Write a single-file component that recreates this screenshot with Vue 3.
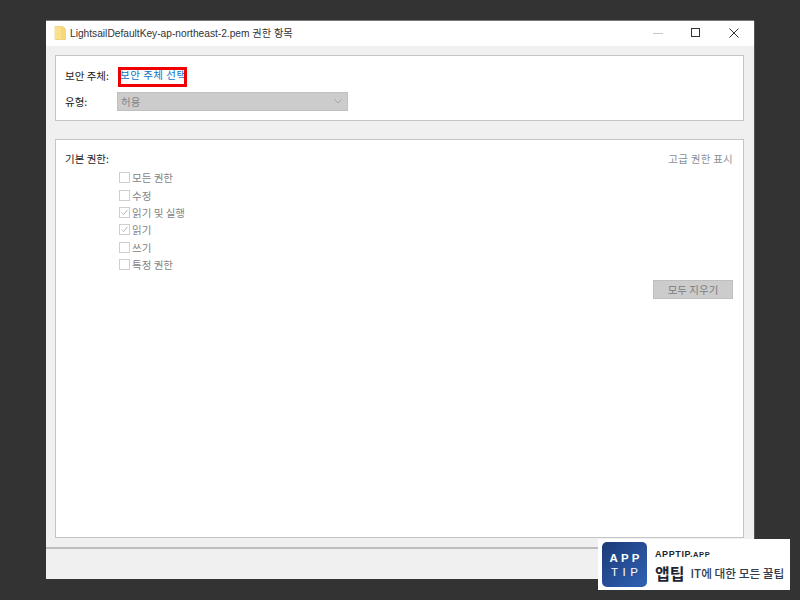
<script setup>
const perms = [
  { label: '모든 권한', on: false },
  { label: '수정', on: false },
  { label: '읽기 및 실행', on: true },
  { label: '읽기', on: true },
  { label: '쓰기', on: false },
  { label: '특정 권한', on: false },
]
</script>

<template>
  <div class="desktop">
    <section class="window">
      <header class="titlebar">
        <svg class="folder" width="12" height="14" viewBox="0 0 12 14">
          <path d="M1 0.5h7.5l3 2.5v10.5H1z" fill="#f8d775" stroke="#e8c25a" stroke-width="0.6" />
          <path d="M1 1h6v12H1z" fill="#fbe08e" />
        </svg>
        <span class="title">LightsailDefaultKey-ap-northeast-2.pem 권한 항목</span>
        <div class="controls">
          <svg width="10" height="10" viewBox="0 0 10 10"><path d="M0 5.5h10" stroke="#c8c8c8" /></svg>
          <svg width="10" height="10" viewBox="0 0 10 10"><rect x="0.5" y="0.5" width="8" height="8" fill="none" stroke="#333" /></svg>
          <svg width="10" height="10" viewBox="0 0 10 10"><path d="M0.5 0.5l9 9M9.5 0.5l-9 9" stroke="#333" /></svg>
        </div>
      </header>

      <div class="body">
        <div class="panel top">
          <div class="row">
            <span class="label">보안 주체:</span>
            <a class="link">보안 주체 선택</a>
          </div>
          <div class="row second">
            <span class="label">유형:</span>
            <div class="select">
              <span>허용</span>
              <svg width="8" height="5" viewBox="0 0 8 5"><path d="M0.5 0.5L4 4l3.5-3.5" fill="none" stroke="#a4a4a4" /></svg>
            </div>
          </div>
        </div>

        <div class="panel main">
          <div class="perm-head">
            <span class="label-strong">기본 권한:</span>
            <span class="advanced">고급 권한 표시</span>
          </div>
          <ul class="perms">
            <li v-for="p in perms" :key="p.label" class="perm">
              <span class="box">
                <svg v-if="p.on" width="11" height="11" viewBox="0 0 11 11"><path d="M2 5.5l2.5 2.5L9 2.5" fill="none" stroke="#a8a8a8" /></svg>
              </span>
              <span>{{ p.label }}</span>
            </li>
          </ul>
          <div class="actions">
            <div class="clear">모두 지우기</div>
          </div>
        </div>
      </div>
      <footer class="footer"></footer>
    </section>

    <aside class="badge">
      <div class="logo">
        <span class="logo-app">APP</span>
        <span class="logo-tip">TIP</span>
      </div>
      <div class="brand">
        <div class="domain">APPTIP.<small>APP</small></div>
        <div class="tagline"><strong>앱팁</strong><span>IT에 대한 모든 꿀팁</span></div>
      </div>
    </aside>
  </div>
</template>

<style>
html, body { margin: 0; background: #333333; }
</style>

<style scoped>
.desktop {
  position: relative;
  width: 800px;
  height: 600px;
  box-sizing: border-box;
  padding: 21px 46px;
  background: #333333;
  overflow: hidden;
  font-family: "Noto Sans CJK KR", "Noto Sans", sans-serif;
  font-size: 10.5px;
  color: #222;
}
.window {
  width: 708px;
  height: 558px;
  display: flex;
  flex-direction: column;
  background: #f0f0f0;
  box-shadow: 0 -1px 0 #777, 1px 0 0 #555;
}
.titlebar {
  height: 25px;
  flex: none;
  display: flex;
  align-items: center;
  background: #fff;
  padding: 0 0 2px 8px;
  box-sizing: border-box;
}
.folder { margin-right: 4px; }
.title { font-family: "Liberation Sans", "Noto Sans CJK KR", sans-serif; font-size: 10.2px; color: #333; }
.controls {
  margin-left: auto;
  display: flex;
  align-items: center;
  gap: 28px;
  padding-right: 15px;
}
.body {
  flex: 1;
  padding: 9px 10px 9px 9px;
  display: flex;
  flex-direction: column;
  gap: 18px;
  border-bottom: 2px solid #bdbdbd;
}
.panel {
  background: #fff;
  border: 1px solid #c4c4c4;
  box-sizing: border-box;
}
.top {
  height: 66px;
  padding: 10px 9px 0;
}
.row { display: flex; align-items: center; height: 18px; }
.second { margin-top: 8px; }
.label { width: 53px; color: #222; }
.link {
  position: relative;
  color: #0a74c8;
  display: block;
  width: 69px;
  height: 18px;
  line-height: 18px;
  padding-left: 2px;
  box-sizing: border-box;
  letter-spacing: 0.5px;
  white-space: nowrap;
}
.link::after {
  content: "";
  position: absolute;
  left: 0;
  top: 1px;
  width: 69px;
  height: 20px;
  border: 3px solid #f00000;
  box-sizing: border-box;
}
.select {
  width: 231px;
  height: 19px;
  box-sizing: border-box;
  display: flex;
  align-items: center;
  justify-content: space-between;
  background: #cccccc;
  border: 1px solid #c0c0c0;
  padding: 0 5px 0 3px;
  color: #868686;
  margin-left: -1px;
}
.main {
  flex: 1;
  padding: 10px 10px 0 9px;
}
.perm-head { display: flex; justify-content: space-between; height: 16px; align-items: center; }
.advanced { color: #8a8f99; letter-spacing: 0.25px; }
.perms {
  list-style: none;
  margin: 3px 0 0;
  padding: 0 0 0 54px;
}
.perm {
  height: 17.4px;
  display: flex;
  align-items: center;
  gap: 2px;
  color: #848484;
}
.box {
  width: 9px;
  height: 9px;
  border: 1px solid #cfcfcf;
  background: #fff;
  display: flex;
  align-items: center;
  justify-content: center;
}
.actions { display: flex; justify-content: flex-end; margin-top: 7px; }
.clear {
  width: 80px;
  height: 19px;
  box-sizing: border-box;
  background: #cccccc;
  border: 1px solid #bfbfbf;
  color: #7c7c7c;
  text-align: center;
  line-height: 17px;
}
.footer { height: 30px; flex: none; }

.badge {
  position: absolute;
  left: 598px;
  top: 539px;
  width: 192px;
  height: 51px;
  background: #fff;
  display: flex;
  align-items: center;
  box-sizing: border-box;
  padding-left: 4px;
  gap: 8px;
}
.logo {
  width: 45px;
  height: 45px;
  border-radius: 5px;
  background: linear-gradient(135deg, #1c3a78, #2f62b4);
  color: #fff;
  display: flex;
  flex-direction: column;
  align-items: center;
  justify-content: center;
  font-family: "Liberation Sans", sans-serif;
  font-size: 11.5px;
  line-height: 14px;
  letter-spacing: 3.2px;
  text-indent: 3.2px;
}
.logo-app { font-weight: 700; }
.logo-tip { font-weight: 400; letter-spacing: 4.5px; text-indent: 4.5px; }
.brand { display: flex; flex-direction: column; color: #1d2433; margin-top: 1px; }
.domain {
  font-family: "Liberation Sans", sans-serif;
  font-weight: 700;
  font-size: 9px;
  letter-spacing: 0.6px;
  line-height: 12px;
}
.domain small { font-size: 7.5px; font-weight: 700; }
.tagline { display: flex; align-items: center; gap: 6px; height: 20px; margin-top: 2px; }
.tagline strong { font-size: 16px; font-weight: 700; line-height: 20px; }
.tagline span { font-size: 11.7px; font-weight: 500; color: #333b4d; white-space: nowrap; }
</style>
